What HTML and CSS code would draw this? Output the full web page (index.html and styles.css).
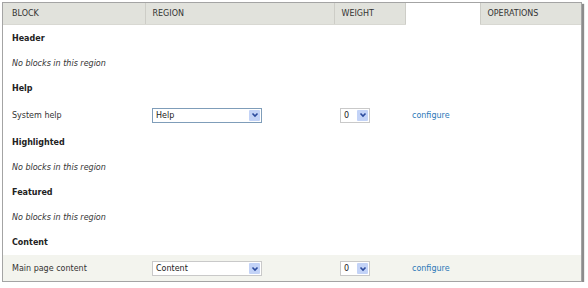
FILE: index.html
```html
<!DOCTYPE html>
<html>
<head>
<meta charset="utf-8">
<link rel="stylesheet" href="styles.css">
</head>
<body>
<div class="frame">
  <table class="blocks">
    <colgroup>
      <col class="w-block"><col class="w-region"><col class="w-weight"><col class="w-blank"><col class="w-ops">
    </colgroup>
    <thead>
      <tr>
        <th>BLOCK</th>
        <th>REGION</th>
        <th>WEIGHT</th>
        <th class="blank"></th>
        <th>OPERATIONS</th>
      </tr>
    </thead>
    <tbody>
      <tr class="title"><td colspan="5">Header</td></tr>
      <tr class="msg"><td colspan="5">No blocks in this region</td></tr>
      <tr class="title"><td colspan="5">Help</td></tr>
      <tr class="block">
        <td class="name">System help</td>
        <td><div class="select region focus"><span class="val">Help</span><span class="btn"><svg viewBox="0 0 10 10" width="10" height="10"><path d="M2.5 3.5 L5 6 L7.5 3.5" fill="none" stroke="#2b4a9c" stroke-width="1.6"/></svg></span></div></td>
        <td><div class="select weight"><span class="val">0</span><span class="btn"><svg viewBox="0 0 10 10" width="10" height="10"><path d="M2.5 3.5 L5 6 L7.5 3.5" fill="none" stroke="#2b4a9c" stroke-width="1.6"/></svg></span></div></td>
        <td><a class="link" href="#">configure</a></td>
        <td></td>
      </tr>
      <tr class="title"><td colspan="5">Highlighted</td></tr>
      <tr class="msg"><td colspan="5">No blocks in this region</td></tr>
      <tr class="title"><td colspan="5">Featured</td></tr>
      <tr class="msg"><td colspan="5">No blocks in this region</td></tr>
      <tr class="title"><td colspan="5">Content</td></tr>
      <tr class="block alt">
        <td class="name">Main page content</td>
        <td><div class="select region"><span class="val">Content</span><span class="btn"><svg viewBox="0 0 10 10" width="10" height="10"><path d="M2.5 3.5 L5 6 L7.5 3.5" fill="none" stroke="#2b4a9c" stroke-width="1.6"/></svg></span></div></td>
        <td><div class="select weight"><span class="val">0</span><span class="btn"><svg viewBox="0 0 10 10" width="10" height="10"><path d="M2.5 3.5 L5 6 L7.5 3.5" fill="none" stroke="#2b4a9c" stroke-width="1.6"/></svg></span></div></td>
        <td><a class="link" href="#">configure</a></td>
        <td></td>
      </tr>
    </tbody>
  </table>
</div>
</body>
</html>
```

FILE: styles.css
```css
html, body {
  margin: 0;
  padding: 0;
  background: #ffffff;
}
body {
  padding: 2px 0 0 2px;
  font-family: "DejaVu Sans", Verdana, sans-serif;
  font-size: 8px;
  color: #222222;
}
.frame {
  width: 578px;
  height: 278px;
  border: 1px solid #a4a4a4;
  box-shadow: 2px 2px 1px rgba(0, 0, 0, 0.45);
  background: #ffffff;
  overflow: hidden;
}
.blocks {
  border-collapse: collapse;
  table-layout: fixed;
  width: 578px;
}
.w-block { width: 142px; }
.w-region { width: 189px; }
.w-weight { width: 71px; }
.w-blank { width: 75px; }
.w-ops { width: 101px; }

.blocks th {
  height: 21px;
  padding: 0 0 0 7px;
  text-align: left;
  font-weight: normal;
  color: #333333;
  background: #e1e2dc;
  border-left: 1px solid #cdcdc7;
  border-bottom: 1px solid #d8d8d2;
  vertical-align: middle;
}
.blocks th:first-child {
  border-left: none;
  padding-left: 9px;
}
.blocks th.blank {
  background: #ffffff;
  border-bottom: none;
}
.blocks td {
  padding: 0 0 0 7px;
  vertical-align: middle;
}
.blocks td:first-child {
  padding-left: 9px;
}
.title td {
  height: 26px;
  font-weight: bold;
  color: #222222;
}
.msg td {
  height: 24px;
  font-style: italic;
  color: #333333;
}
.block td {
  height: 28px;
  color: #333333;
}
.block.alt td {
  height: 27px;
  background: #f3f4ee;
}
.select {
  display: flex;
  align-items: center;
  justify-content: space-between;
  box-sizing: border-box;
  height: 15px;
  background: #ffffff;
  border: 1px solid #c9c9c9;
  padding: 0 1px 0 3px;
  color: #222222;
}
.select.focus {
  border-color: #7f9db9;
}
.select.region { width: 110px; }
.select.weight { width: 30px; margin-left: -1px; }
.btn {
  display: flex;
  align-items: center;
  justify-content: center;
  width: 11px;
  height: 11px;
  background: #c3d3f7;
  border-radius: 1px;
}
.link {
  color: #2b78b8;
  text-decoration: none;
}
```
